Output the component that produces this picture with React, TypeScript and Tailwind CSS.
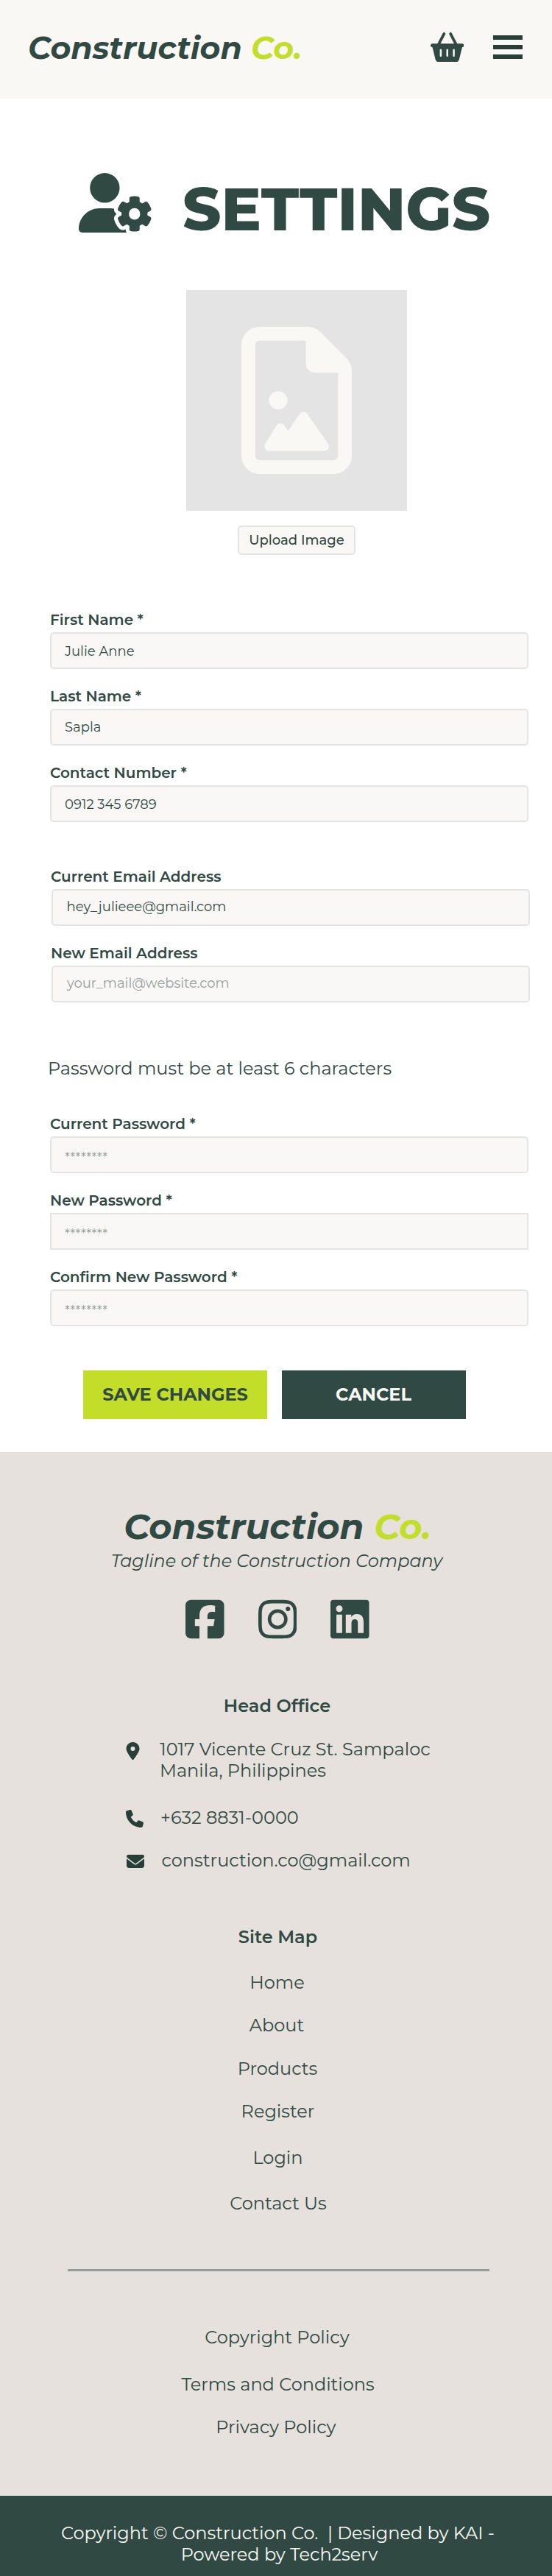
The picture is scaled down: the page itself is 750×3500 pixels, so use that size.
import {
  FaBasketShopping,
  FaEnvelope,
  FaInstagram,
  FaLinkedin,
  FaLocationDot,
  FaPhone,
  FaRegFileImage,
  FaSquareFacebook,
  FaUserGear,
} from "react-icons/fa6";

type FieldProps = {
  label: string;
  value: string;
  muted?: boolean;
  square?: boolean;
  labelClass?: string;
  textClass?: string;
};

function Field({ label, value, muted, square, labelClass = "", textClass = "pt-3 pl-[18px]" }: FieldProps) {
  return (
    <div className="flex flex-col gap-[5px]">
      <div className={`text-[20px] leading-6 font-semibold ${labelClass}`}>{label}</div>
      <div
        className={`h-[50px] border-2 border-[#e4e4e4] bg-[#f9f8f6] text-[18px] leading-[22px] ${
          square ? "" : "rounded-[5px]"
        } ${muted ? "text-[#97a19d]" : ""} ${textClass}`}
      >
        {value}
      </div>
    </div>
  );
}

function Brand() {
  return (
    <>
      Construction <span className="text-[#c3de29]">Co.</span>
    </>
  );
}

export default function App() {
  return (
    <div className="w-[750px] bg-white font-[Montserrat,Inter,sans-serif] text-[#304a43]">
      <header className="flex h-[134px] items-start bg-[#f9f8f4] pl-[38px]">
        <div className="mt-[39px] w-[546.5px] text-[42.6px] leading-[52px] font-bold whitespace-nowrap italic">
          <Brand />
        </div>
        <FaBasketShopping className="mt-[43.5px] h-[40.5px] w-[45.5px]" />
        <div className="mt-12 ml-10 flex w-10 flex-col gap-[7px]">
          <span className="h-1.5 bg-[#283e39]" />
          <span className="h-1.5 bg-[#283e39]" />
          <span className="h-1.5 bg-[#283e39]" />
        </div>
      </header>

      <main className="flex h-[1839px] flex-col">
        <div className="mt-[101px] flex h-[98px] gap-[40px] pl-[107px]">
          <FaUserGear className="h-[81px] w-[101px] shrink-0" />
          <h1 className="text-[81px] leading-[98px] font-extrabold">SETTINGS</h1>
        </div>

        <div className="mt-[61px] ml-[253px] flex w-[300px] flex-col items-center gap-5">
          <div className="flex size-[300px] items-center justify-center bg-[#e4e4e4]">
            <FaRegFileImage className="h-[200px] w-[150px] text-[#f9f8f4]" />
          </div>
          <button className="flex h-10 w-40 items-center justify-center rounded-[5px] border-2 border-[#e4e4e4] bg-[#f9f8f4] text-[18px] leading-[22px] font-medium">
            Upload Image
          </button>
        </div>

        <section className="mt-[76px] ml-[68px] flex w-[650px] flex-col gap-[25px]">
          <Field label="First Name *" value="Julie Anne" textClass="pt-[13px] pl-[18px]" />
          <Field label="Last Name *" value="Sapla" />
          <Field label="Contact Number *" value="0912 345 6789" textClass="pt-[13px] pl-[18px]" />
        </section>

        <section className="mt-[62px] ml-[70px] flex w-[650px] flex-col gap-[25px]">
          <Field
            label="Current Email Address"
            value="hey_julieee@gmail.com"
            labelClass="-ml-px"
            textClass="pt-[11px] pl-[18.5px]"
          />
          <Field
            label="New Email Address"
            value="your_mail@website.com"
            muted
            labelClass="-ml-px"
            textClass="pt-[11px] pl-[19px]"
          />
        </section>

        <p className="mt-[75px] ml-[65px] text-[24px] leading-[29px]">Password must be at least 6 characters</p>

        <section className="mt-[49px] ml-[68px] flex w-[650px] flex-col gap-[25px]">
          <Field label="Current Password *" value="********" muted textClass="pt-4 pl-[18px]" />
          <Field label="New Password *" value="********" muted square textClass="pt-4 pl-[18px]" />
          <Field label="Confirm New Password *" value="********" muted textClass="pt-4 pl-[18px]" />
        </section>

        <div className="mt-[60px] ml-[113px] flex gap-5 text-[24px] leading-[29px] font-bold">
          <button className="flex h-[66px] w-[250px] items-start justify-center bg-[#c3de29] pt-[18px]">
            SAVE CHANGES
          </button>
          <button className="flex h-[66px] w-[250px] items-start justify-center bg-[#304a43] pt-[18px] pr-px text-[#f9f8f4]">
            CANCEL
          </button>
        </div>
      </main>

      <footer className="flex flex-col text-[24px] leading-[29px]">
        <div className="flex h-[1418px] flex-col items-center bg-[#e6e1dc]">
          <div className="mt-[72px] pl-[4px] text-[47.8px] leading-[58px] font-bold italic">
            <Brand />
          </div>
          <p className="mt-[3px] pl-0.5 text-[23.9px] italic">Tagline of the Construction Company</p>

          <div className="mt-[35px] flex gap-[46px] pl-1">
            <FaSquareFacebook className="h-[60px] w-[52.5px]" />
            <FaInstagram className="h-[60px] w-[52.5px]" />
            <FaLinkedin className="h-[60px] w-[52.5px]" />
          </div>

          <h2 className="mt-[73px] pl-[3px] font-semibold">Head Office</h2>

          <div className="mt-[30px] flex w-full flex-col pl-[171px]">
            <div className="flex">
              <FaLocationDot className="mt-[5px] h-6 w-[19px] text-[#283e39]" />
              <p className="ml-[27px]">
                1017 Vicente Cruz St. Sampaloc
                <br />
                Manila, Philippines
              </p>
            </div>
            <div className="mt-[35px] flex">
              <FaPhone className="mt-1 size-6 text-[#283e39]" />
              <p className="ml-[23px]">+632 8831-0000</p>
            </div>
            <div className="mt-[29px] flex">
              <FaEnvelope className="mt-1 ml-[0.5px] size-6 text-[#283e39]" />
              <p className="ml-6">construction.co@gmail.com</p>
            </div>
          </div>

          <h2 className="mt-[75px] pl-[5px] font-semibold">Site Map</h2>
          <nav className="mt-[33px] flex flex-col items-center">
            <a className="pl-[3px]">Home</a>
            <a className="mt-[29px] pl-0.5">About</a>
            <a className="mt-[30px] pl-1">Products</a>
            <a className="mt-[29px] pl-[5px]">Register</a>
            <a className="mt-[34px] pl-[5px]">Login</a>
            <a className="mt-[33px] pl-1.5">Contact Us</a>
          </nav>

          <div className="mt-[75px] ml-[7px] h-[3px] w-[573px] bg-[#949d99]" />

          <nav className="mt-[75px] flex flex-col items-center">
            <a className="pl-[3px]">Copyright Policy</a>
            <a className="mt-[35px] pl-[5px]">Terms and Conditions</a>
            <a className="mt-[29px]">Privacy Policy</a>
          </nav>
        </div>

        <div className="flex h-[109px] flex-col items-center bg-[#304a43] pt-9 text-[#f9f8f4]">
          <p className="pl-[5px] whitespace-pre">{"Copyright © Construction Co.  | Designed by KAI -"}</p>
          <p className="pl-[9px]">Powered by Tech2serv</p>
        </div>
      </footer>
    </div>
  );
}
